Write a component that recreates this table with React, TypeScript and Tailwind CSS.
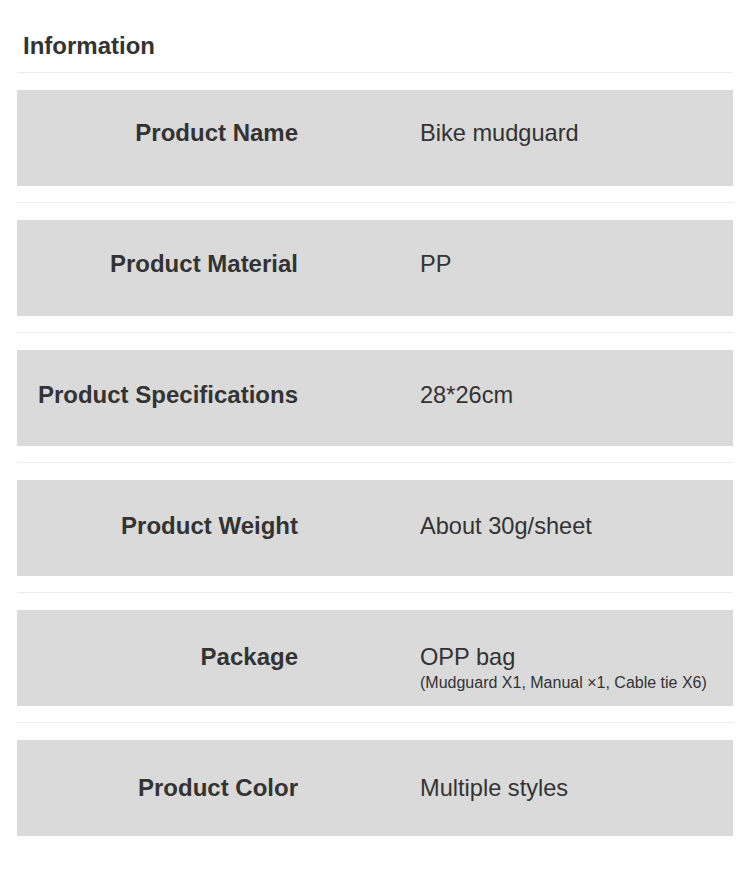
import React from "react";

const rows: { label: string; value: string; note?: string; pt: string }[] = [
  { label: "Product Name", value: "Bike mudguard", pt: "pt-[29px]" },
  { label: "Product Material", value: "PP", pt: "pt-[30px]" },
  { label: "Product Specifications", value: "28*26cm", pt: "pt-[31px]" },
  { label: "Product Weight", value: "About 30g/sheet", pt: "pt-[32px]" },
  { label: "Package", value: "OPP bag", note: "(Mudguard X1, Manual \u00d71, Cable tie X6)", pt: "pt-[33px]" },
  { label: "Product Color", value: "Multiple styles", pt: "pt-[34px]" },
];

export default function App() {
  return (
    <div className="w-[750px] h-[873px] bg-white text-[#333333] font-['Liberation_Sans',Arial,sans-serif]">
      <div className="pt-[32px] pl-[23px] h-[72px]">
        <div className="text-[24px] leading-[28px] font-bold">Information</div>
      </div>
      <div className="mx-[17px] h-px bg-[#ececec]" />
      {rows.map((r, i) => (
        <div key={r.label}>
          <div className={`mx-[17px] mt-[17px] h-[96px] bg-[#dadada] flex ${r.pt}`}>
            <div className="w-[281px] shrink-0 text-right text-[24px] leading-[28px] font-bold">{r.label}</div>
            <div className="ml-[122px] flex flex-col">
              <div className="text-[23.6px] leading-[28px]">{r.value}</div>
              {r.note && <div className="text-[16px] leading-[20px] mt-[2px]">{r.note}</div>}
            </div>
          </div>
          {i < rows.length - 1 && <div className="mx-[17px] mt-[16px] h-px bg-[#ececec]" />}
        </div>
      ))}
    </div>
  );
}
